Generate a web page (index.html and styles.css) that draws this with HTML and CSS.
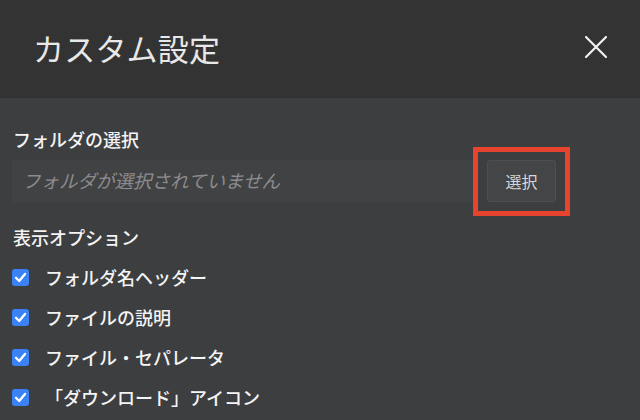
FILE: index.html
```html
<!DOCTYPE html>
<html lang="ja">
<head>
<meta charset="utf-8">
<title>カスタム設定</title>
<link rel="stylesheet" href="styles.css">
</head>
<body>
<div class="dialog">
  <header class="header">
    <h1 class="title">カスタム設定</h1>
    <button class="close" aria-label="閉じる">
      <svg width="22" height="22" viewBox="0 0 22 22"><path d="M1 1 L21 21 M21 1 L1 21" stroke="#f2f2f2" stroke-width="2.2" stroke-linecap="round" fill="none"/></svg>
    </button>
  </header>
  <main class="content">
    <div class="section-label">フォルダの選択</div>
    <div class="folder-row">
      <div class="folder-input">フォルダが選択されていません</div>
      <button class="select-btn">選択</button>
    </div>
    <div class="section-label options-label">表示オプション</div>
    <ul class="options">
      <li class="option"><span class="check"><svg width="17" height="17" viewBox="0 0 17 17"><path d="M4 8.8 L7.2 12 L13 5" stroke="#fff" stroke-width="2.3" stroke-linecap="round" stroke-linejoin="round" fill="none"/></svg></span><span class="option-text">フォルダ名ヘッダー</span></li>
      <li class="option"><span class="check"><svg width="17" height="17" viewBox="0 0 17 17"><path d="M4 8.8 L7.2 12 L13 5" stroke="#fff" stroke-width="2.3" stroke-linecap="round" stroke-linejoin="round" fill="none"/></svg></span><span class="option-text">ファイルの説明</span></li>
      <li class="option"><span class="check"><svg width="17" height="17" viewBox="0 0 17 17"><path d="M4 8.8 L7.2 12 L13 5" stroke="#fff" stroke-width="2.3" stroke-linecap="round" stroke-linejoin="round" fill="none"/></svg></span><span class="option-text">ファイル・セパレータ</span></li>
      <li class="option"><span class="check"><svg width="17" height="17" viewBox="0 0 17 17"><path d="M4 8.8 L7.2 12 L13 5" stroke="#fff" stroke-width="2.3" stroke-linecap="round" stroke-linejoin="round" fill="none"/></svg></span><span class="option-text">「ダウンロード」アイコン</span></li>
    </ul>
  </main>
</div>
</body>
</html>
```
FILE: styles.css
```css
* { box-sizing: border-box; }
html, body {
  margin: 0;
  padding: 0;
  background: #3d3e40;
  font-family: "Noto Sans CJK JP", "Noto Sans", sans-serif;
  color: #f2f2f2;
}
.dialog {
  width: 640px;
  height: 420px;
  overflow: hidden;
  background: #3d3e40;
}
.header {
  height: 98px;
  background: #333333;
  display: flex;
  align-items: center;
  justify-content: space-between;
  padding: 0 33px 0 33px;
}
.title {
  margin: 0;
  font-size: 31px;
  font-weight: 400;
  color: #e8e8e8;
  letter-spacing: 0.2px;
  line-height: 40px;
  padding-bottom: 2px;
}
.close {
  background: none;
  border: 0;
  padding: 0;
  width: 22px;
  height: 22px;
  margin-bottom: 4px;
  display: flex;
}
.content {
  padding: 29px 12px 0 12px;
}
.section-label {
  font-size: 18px;
  line-height: 24px;
  font-weight: 500;
  color: #f4f4f4;
  padding-left: 1px;
}
.folder-row {
  margin-top: 9px;
  display: flex;
  align-items: center;
  gap: 13px;
  padding-right: 72px;
}
.folder-input {
  flex: 1;
  height: 42px;
  background: #414244;
  color: #8c8c8e;
  font-style: italic;
  font-size: 18.5px;
  line-height: 40px;
  padding-left: 10px;
}
.select-btn {
  position: relative;
  width: 69px;
  height: 42px;
  background: #444547;
  border: 1px solid #4e4f51;
  border-radius: 3px;
  color: #d6d6d6;
  font-family: inherit;
  font-size: 16px;
}
.select-btn::after {
  content: "";
  position: absolute;
  left: -15px;
  right: -15px;
  top: -14px;
  bottom: -15px;
  border: 5px solid #e8432c;
}
.options-label {
  margin-top: 23px;
}
.options {
  list-style: none;
  margin: 8px 0 0 0;
  padding: 0;
}
.option {
  height: 40px;
  display: flex;
  align-items: center;
}
.check {
  width: 17px;
  height: 17px;
  border-radius: 3px;
  background: #3b82f6;
  display: flex;
}
.option-text {
  margin-left: 16px;
  font-size: 18px;
  font-weight: 500;
  color: #f4f4f4;
}
```
